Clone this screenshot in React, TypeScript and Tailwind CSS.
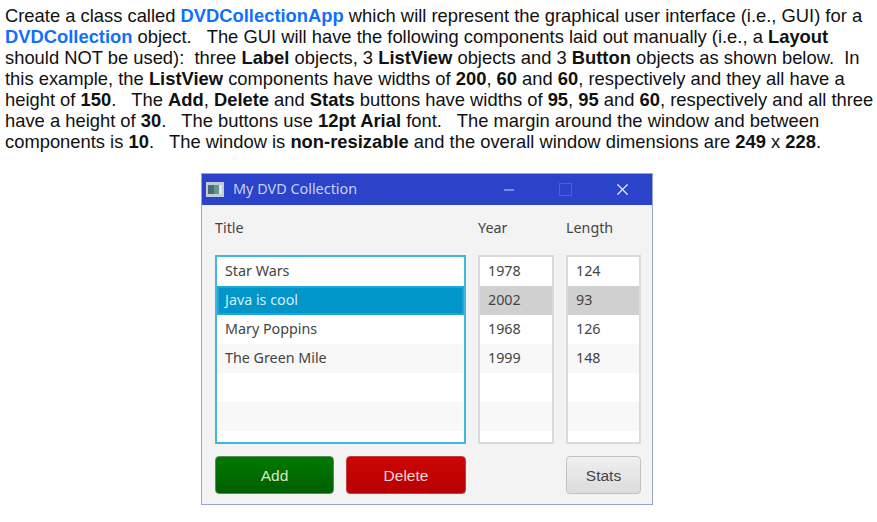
import React from 'react';
import { X, Minus } from 'lucide-react';

const titles = ['Star Wars', 'Java is cool', 'Mary Poppins', 'The Green Mile', '', ''];
const years = ['1978', '2002', '1968', '1999', '', ''];
const lengths = ['124', '93', '126', '148', '', ''];

function Blue({ children }: { children: React.ReactNode }) {
  return <b className="text-[#0f6fff]">{children}</b>;
}

function ListView({ items, focused, width }: { items: string[]; focused?: boolean; width: string }) {
  return (
    <div className={`${width} h-[189px] flex flex-col bg-white ${focused ? 'border-2 border-[#3fb8e4]' : 'border-2 border-[#dadada]'}`}>
      {items.map((item, i) => {
        const selected = i === 1;
        const stripe = i % 2 === 1 ? 'bg-[#f8f8f8]' : 'bg-white';
        let cls = `${stripe} text-[#444]`;
        if (selected) {
          cls = focused
            ? 'bg-[#0096c9] text-[#d5eef7] border-2 border-[#1fa6d5] pl-[6px]'
            : 'bg-[#d0d0d0] text-[#444] pl-[8px]';
        } else {
          cls += focused ? ' pl-2' : ' pl-[8px]';
        }
        return (
          <div key={i} className={`h-[29px] shrink-0 flex items-center pb-[2px] text-[14.3px] ${cls}`}>
            {item}
          </div>
        );
      })}
    </div>
  );
}

export default function App() {
  return (
    <div className="w-[877px] h-[522px] bg-white overflow-hidden pl-[5px] pt-[5px] font-['Liberation_Sans',sans-serif]">
      <div className="text-[18.36px] leading-[21px] text-[#111] whitespace-nowrap">
        <div>Create a class called <Blue>DVDCollectionApp</Blue> which will represent the graphical user interface (i.e., GUI) for a</div>
        <div><Blue>DVDCollection</Blue> object. &nbsp; The GUI will have the following components laid out manually (i.e., a <b>Layout</b></div>
        <div>should NOT be used): &nbsp;three <b>Label</b> objects, 3 <b>ListView</b> objects and 3 <b>Button</b> objects as shown below. &nbsp;In</div>
        <div>this example, the <b>ListView</b> components have widths of <b>200</b>, <b>60</b> and <b>60</b>, respectively and they all have a</div>
        <div>height of <b>150</b>. &nbsp; The <b>Add</b>, <b>Delete</b> and <b>Stats</b> buttons have widths of <b>95</b>, <b>95</b> and <b>60</b>, respectively and all three</div>
        <div>have a height of <b>30</b>. &nbsp; The buttons use <b>12pt Arial</b> font. &nbsp; The margin around the window and between</div>
        <div>components is <b>10</b>. &nbsp; The window is <b>non-resizable</b> and the overall window dimensions are <b>249</b> x <b>228</b>.</div>
      </div>

      {/* Window */}
      <div className="ml-[196px] mt-[21px] w-[452px] h-[332px] border border-[#9aa3cf] bg-[#f3f3f3] font-['Noto_Sans',sans-serif]">
        <div className="h-[31px] bg-[#2a43c8] flex items-center pl-[4px] pr-[20px] text-[#c9d0f2]">
          <svg width="18" height="15" viewBox="0 0 18 15" className="shrink-0">
            <rect width="18" height="15" fill="#c4cbd8" />
            <rect x="2" y="3" width="6" height="9" fill="#4d6a78" />
            <rect x="8" y="3" width="5" height="9" fill="#5f9a86" />
            <rect x="13" y="3" width="3" height="9" fill="#dfe3ea" />
          </svg>
          <span className="ml-[9px] text-[14.4px] pb-[2px]">My DVD Collection</span>
          <Minus size={16} strokeWidth={1.5} className="ml-auto text-[#c9d0f2]" />
          <span className="ml-[42px] w-[13px] h-[13px] border border-[#4a5fd4]" />
          <X size={19} strokeWidth={1.5} className="ml-[41px] text-[#e4e8fa]" />
        </div>

        <div className="pl-[13px] pr-[11px]">
          <div className="flex h-[50px] items-center text-[14.3px] text-[#444] pb-[4px]">
            <span className="w-[263px]">Title</span>
            <span className="w-[88px]">Year</span>
            <span>Length</span>
          </div>
          <div className="flex gap-[12px]">
            <ListView items={titles} focused width="w-[251px]" />
            <ListView items={years} width="w-[76px]" />
            <ListView items={lengths} width="w-[75px]" />
          </div>
          <div className="flex mt-[12px] text-[15.5px] font-['Liberation_Sans',sans-serif]">
            <button className="w-[119px] h-[38px] pt-[2px] rounded-[4px] bg-gradient-to-b from-[#007a00] to-[#005f00] border border-[#5a8a5a] text-[#d5e8c0]">Add</button>
            <button className="ml-[12px] w-[120px] h-[38px] pt-[2px] rounded-[4px] bg-gradient-to-b from-[#cc0606] to-[#b80000] border border-[#c04040] text-[#f5d5d5]">Delete</button>
            <button className="ml-[100px] w-[75px] h-[38px] pt-[2px] rounded-[4px] bg-gradient-to-b from-[#f0f0f0] to-[#dcdcdc] border border-[#c2c2c2] text-[#444]">Stats</button>
          </div>
        </div>
      </div>
    </div>
  );
}
